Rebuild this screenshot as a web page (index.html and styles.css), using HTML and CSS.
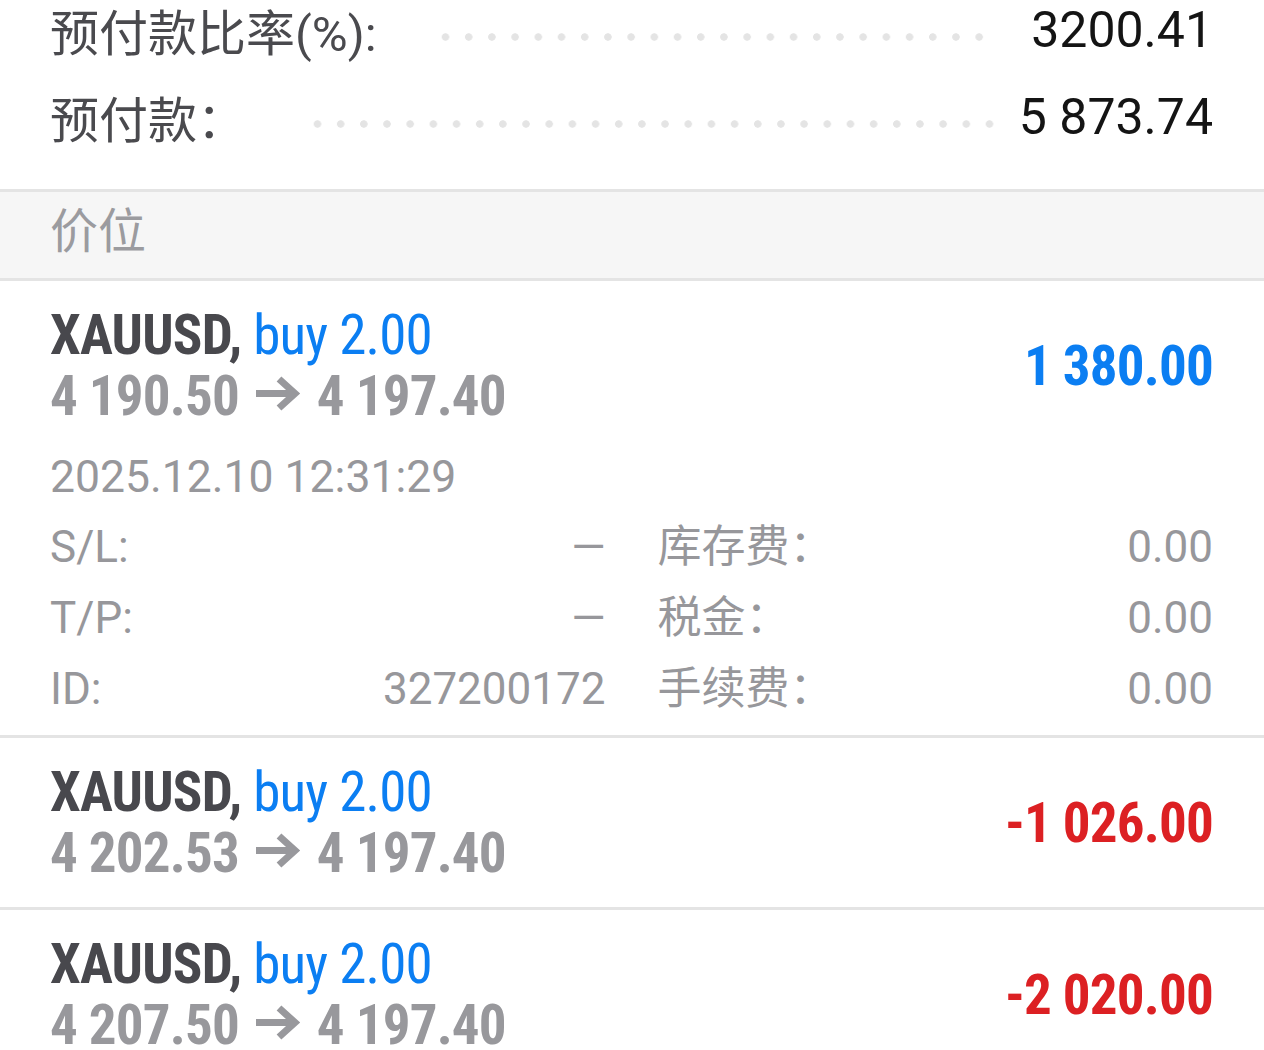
FILE: index.html
```html
<!DOCTYPE html>
<html lang="zh-CN">
<head>
<meta charset="UTF-8">
<meta name="viewport" content="width=device-width, initial-scale=1.0">
<title>交易</title>
<link rel="stylesheet" href="styles.css">
</head>
<body>

<!-- account summary -->
<div class="summary">
  <div class="summary-row">
    <span class="summary-label">预付款比率(%):</span>
    <span class="leader leader-first"></span>
    <span class="summary-value">3200.41</span>
  </div>
  <div class="summary-row">
    <span class="summary-label">预付款：</span>
    <span class="leader leader-second"></span>
    <span class="summary-value">5 873.74</span>
  </div>
</div>

<div class="section-title">价位</div>

<!-- open positions -->
<div class="position position-open">
  <div class="position-head">
    <div class="position-main">
      <div class="position-symbol">XAUUSD, <span class="position-type">buy 2.00</span></div>
      <div class="position-prices">4 190.50 <svg class="arrow" width="46" height="36" viewBox="0 0 46 36"><path d="M1 17.5 H41 M24 3 L40 17.5 L24 32" fill="none" stroke="#98989c" stroke-width="7"/></svg> 4 197.40</div>
    </div>
    <div class="profit profit-plus">1 380.00</div>
  </div>
  <div class="position-time">2025.12.10 12:31:29</div>
  <div class="details">
    <div class="detail"><span>S/L:</span><span>—</span></div>
    <div class="detail"><span>库存费：</span><span>0.00</span></div>
    <div class="detail"><span>T/P:</span><span>—</span></div>
    <div class="detail"><span>税金：</span><span>0.00</span></div>
    <div class="detail"><span>ID:</span><span>327200172</span></div>
    <div class="detail"><span>手续费：</span><span>0.00</span></div>
  </div>
</div>

<div class="position">
  <div class="position-head">
    <div class="position-main">
      <div class="position-symbol">XAUUSD, <span class="position-type">buy 2.00</span></div>
      <div class="position-prices">4 202.53 <svg class="arrow" width="46" height="36" viewBox="0 0 46 36"><path d="M1 17.5 H41 M24 3 L40 17.5 L24 32" fill="none" stroke="#98989c" stroke-width="7"/></svg> 4 197.40</div>
    </div>
    <div class="profit profit-minus">-1 026.00</div>
  </div>
</div>

<div class="position">
  <div class="position-head">
    <div class="position-main">
      <div class="position-symbol">XAUUSD, <span class="position-type">buy 2.00</span></div>
      <div class="position-prices">4 207.50 <svg class="arrow" width="46" height="36" viewBox="0 0 46 36"><path d="M1 17.5 H41 M24 3 L40 17.5 L24 32" fill="none" stroke="#98989c" stroke-width="7"/></svg> 4 197.40</div>
    </div>
    <div class="profit profit-minus">-2 020.00</div>
  </div>
</div>

</body>
</html>
```

FILE: styles.css
```css
body {
  margin: 0;
  background: #fff;
  font-family: Roboto, "Noto Sans CJK SC", sans-serif;
  overflow: hidden;
}

/* summary block at the top */
.summary {
  margin-top: -14px;
  padding: 0 51px 29px 50px;
}

.summary-row {
  display: flex;
  align-items: center;
  height: 87px;
  font-size: 49px;
}

.summary-label {
  color: #4a4a4e;
  white-space: nowrap;
}

.summary-value {
  color: #141414;
  font-size: 50px;
  white-space: nowrap;
}

.leader {
  flex: 1;
  height: 8px;
  margin-top: 14px;
  background: radial-gradient(circle, #e4e4e4 3.4px, transparent 4px);
  background-size: 23px 8px;
  background-repeat: space;
}

.leader-first { margin-left: 57px; margin-right: 40px; }
.leader-second { margin-left: 60px; margin-right: 18px; }

.section-title {
  border-top: 3px solid #e4e4e4;
  border-bottom: 3px solid #e4e4e4;
  background: #f6f6f6;
  color: #9b9b9f;
  font-size: 48px;
  line-height: 80px;
  padding: 0 50px 6px;
}

/* position rows */
.position {
  padding: 24px 51px 23px 50px;
  border-bottom: 3px solid #e4e4e4;
}

.position-open {
  padding-bottom: 10px;
}

.position-head {
  display: flex;
  align-items: center;
  justify-content: space-between;
}

.position-symbol,
.position-prices,
.profit {
  font-family: "Roboto Condensed", Roboto, sans-serif;
  font-stretch: condensed;
  font-weight: 700;
  font-size: 55px;
  line-height: 61px;
  letter-spacing: -0.8px;
  white-space: nowrap;
}

.position-symbol {
  color: #48484d;
}

.position-type {
  color: #0b7ef2;
  font-weight: 400;
}

.position-prices {
  color: #98989c;
}

.arrow {
  vertical-align: 3px;
  margin: 0 4px;
}

.profit-plus { color: #0b7ef2; }
.profit-minus { color: #dc2023; }

.position-time {
  margin-top: 20px;
  color: #97979b;
  font-size: 44.5px;
  line-height: 60px;
}

.details {
  display: grid;
  grid-template-columns: 1fr 1fr;
  column-gap: 52px;
  margin-top: 5px;
  color: #97979b;
  font-size: 44px;
  line-height: 71px;
}

.detail {
  display: flex;
  justify-content: space-between;
}
```
